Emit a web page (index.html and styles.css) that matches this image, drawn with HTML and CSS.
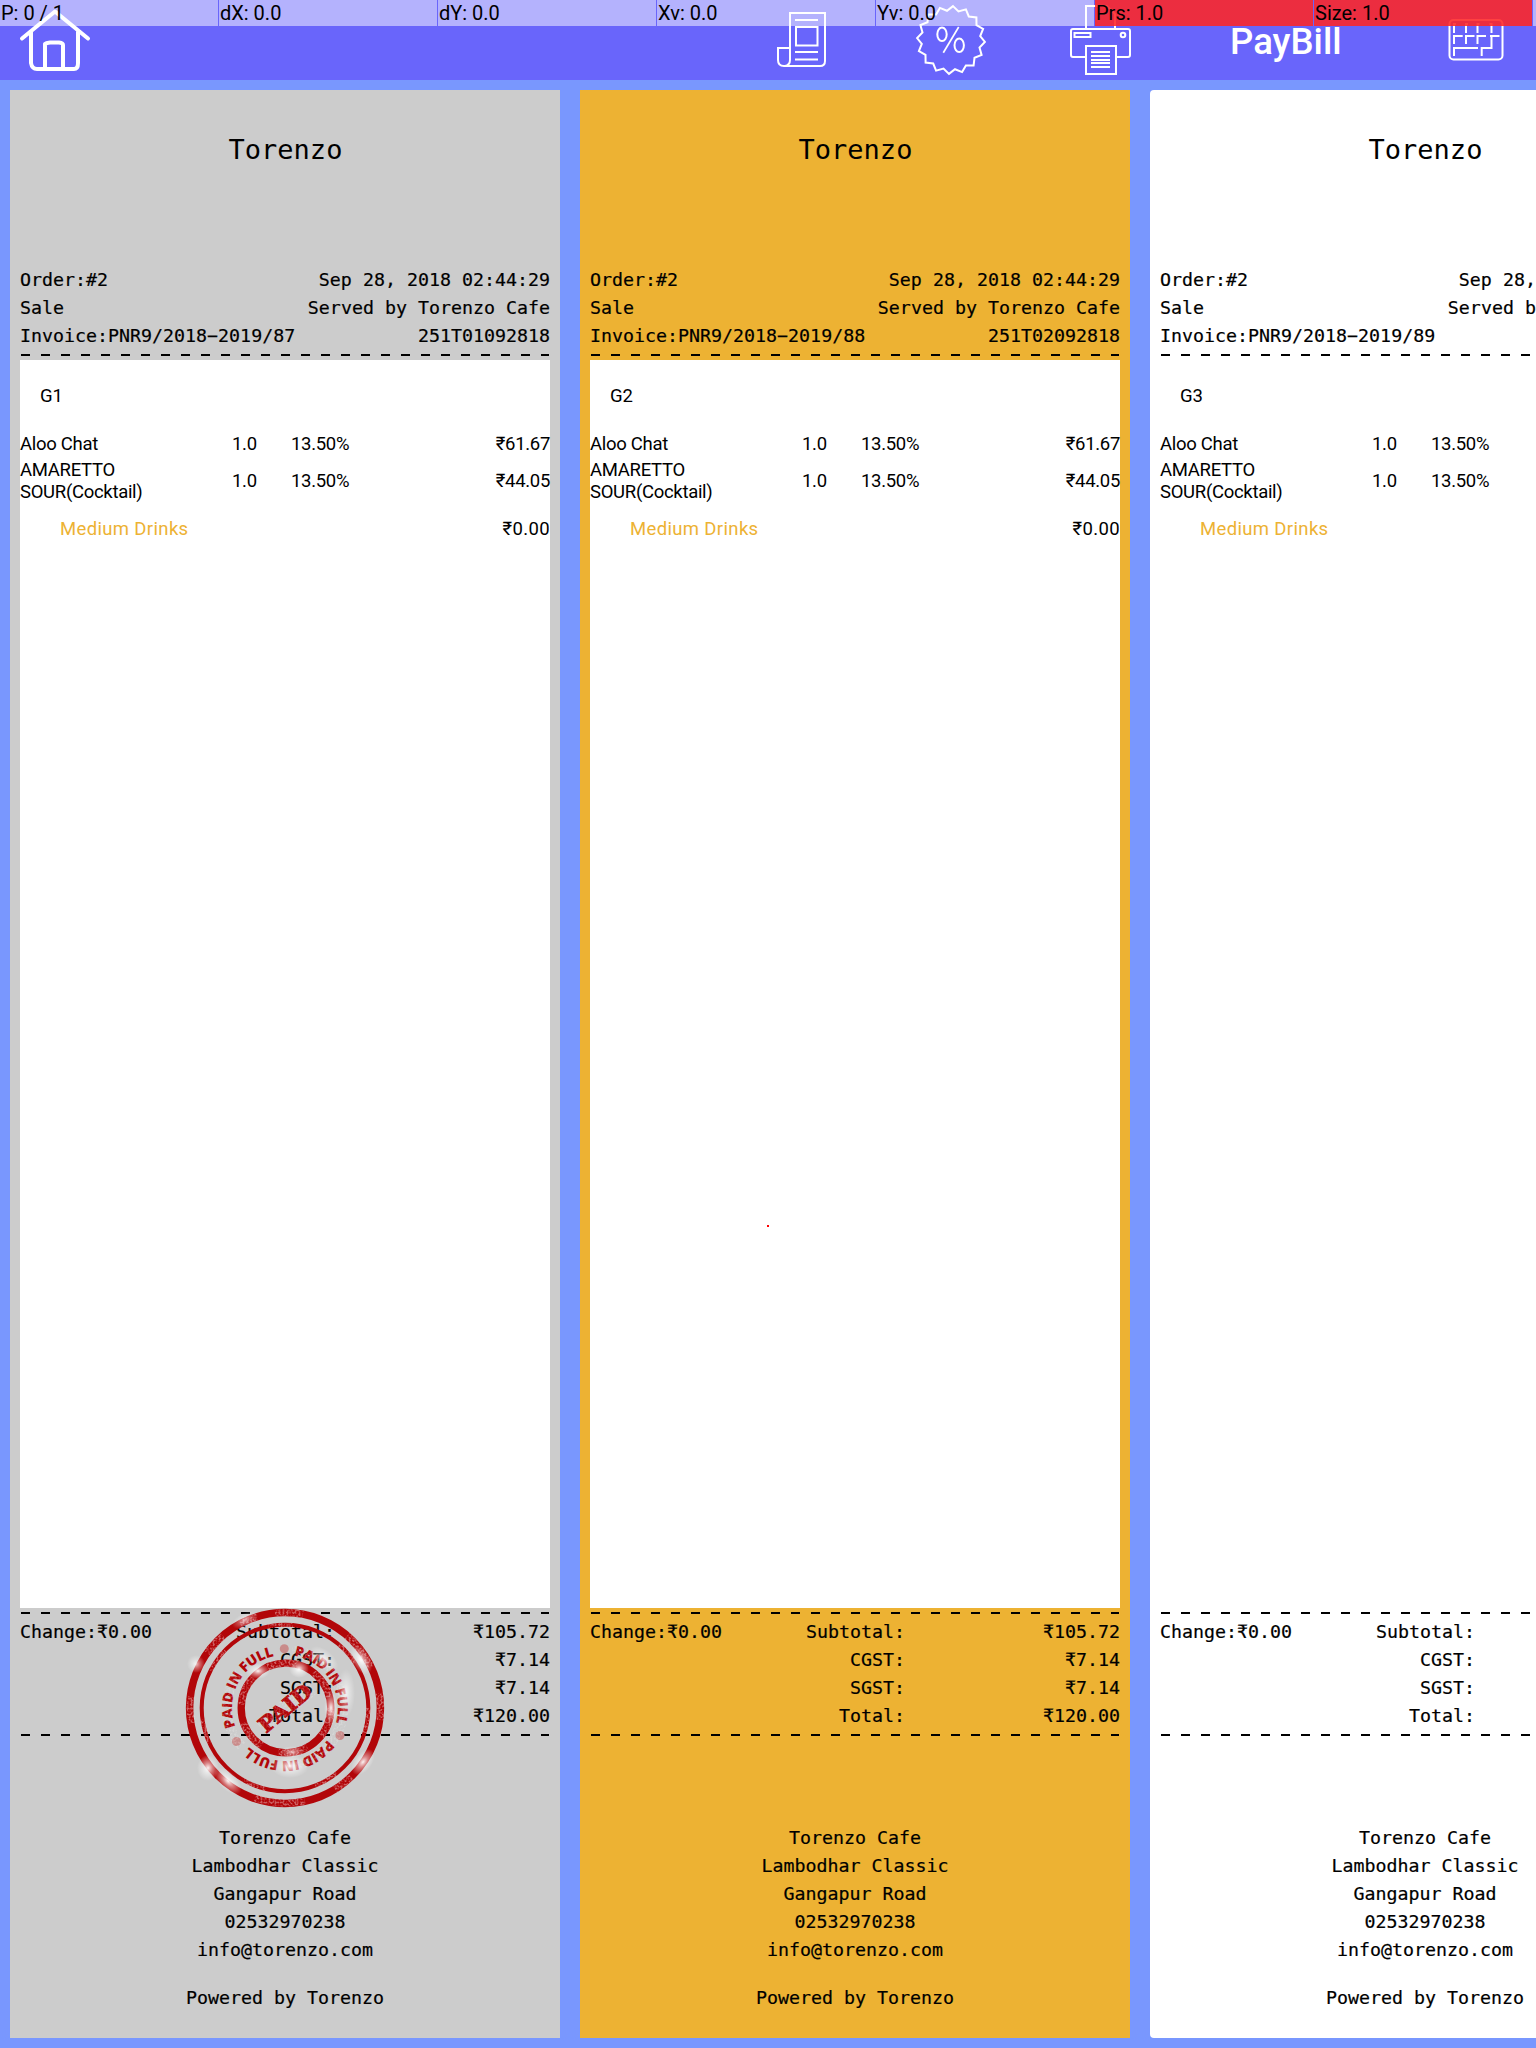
FILE: index.html
```html
<!DOCTYPE html>
<html lang="en">
<head>
<meta charset="utf-8">
<title>PayBill</title>
<link rel="stylesheet" href="styles.css">
</head>
<body>
<header class="bar">
  <svg class="ic home" width="72" height="66" viewBox="0 0 72 66" fill="none" stroke="#fff" stroke-width="4" stroke-linecap="round" stroke-linejoin="round"><path d="M3 32.500L36 5.500L69 32.500M12 26V57Q13 63 18 63H55Q59 63 59 57V26M26 62V38Q27 37 31 36.500H40Q44 37 44 39V62"/></svg>
  <svg class="ic report" width="50" height="58" viewBox="0 0 50 58" fill="none" stroke="#fff" stroke-width="2"><path d="M13 50V3H48V51Q48 56 43 56H7Q1 56 1 50V38H13V50Q13 55 8 56M18 10H41M19 17H40.500V35.500H19ZM18 42H41M18 49.500H41"/></svg>
  <svg class="ic pct" width="72" height="72" viewBox="-36 -36 72 72" fill="none" stroke="#fff" stroke-width="2"><path id="badge"/><ellipse cx="-9" cy="-5.700" rx="4.700" ry="6.800"/><ellipse cx="8.200" cy="5.300" rx="4.700" ry="6.800"/><path d="M7.700 -13L-7.700 12.700" stroke-width="1.700"/></svg>
  <svg class="ic printer" width="64" height="72" viewBox="0 0 64 72" fill="none" stroke="#fff" stroke-width="2"><path d="M17 26V3H38L46 11V26M17 54H4Q2 54 2 52V28Q2 26 4 26H59Q61 26 61 28V52Q61 54 59 54H47M5.500 30H21.500V34H5.500ZM17 43H47V71H17ZM22 49H41M22 53H41M22 57H41M22 60H41M22 64H41"/><circle cx="54" cy="32" r="2.300"/></svg>
  <span class="pay">PayBill</span>
  <svg class="ic keys" width="58" height="44" viewBox="0 0 58 44" fill="none" stroke="#fff" stroke-width="2"><rect x="2.500" y="2" width="53" height="39.500" rx="4"/><path d="M7 15V6H9M19 15V6H21M30.500 15V6H32.500M44.500 15V6H42.500M7 26V18H15.700M19 26V18H27.500M30.500 26V18H39M52.500 18H43M44.500 18V30H34.700V38M7 38V30H31"/></svg>
</header>
<div class="debug">
  <span>P: 0 / 1</span><span>dX: 0.0</span><span>dY: 0.0</span><span>Xv: 0.0</span><span>Yv: 0.0</span><span class="hot">Prs: 1.0</span><span class="hot">Size: 1.0</span>
</div>
<main class="bills" id="bills"></main>
<i class="touch"></i>
<template id="stamp">
<svg class="stamp" width="220" height="220" viewBox="-110 -110 220 220">
  <defs>
    <path id="a1" d="M-49.700 18.500A53 53 0 0 1 -8 -52.400"/>
    <path id="a2" d="M9 -52.200A53 53 0 0 1 50 17.500"/>
    <path id="a3" d="M42.500 31.700A53 53 0 0 1 -36 38.900"/>
    <radialGradient id="w"><stop offset="0" stop-color="#fff" stop-opacity=".95"/><stop offset=".4" stop-color="#fff" stop-opacity=".5"/><stop offset="1" stop-color="#fff" stop-opacity="0"/></radialGradient>
    <filter id="grain" x="-10%" y="-10%" width="120%" height="120%"><feTurbulence type="fractalNoise" baseFrequency=".5" numOctaves="2" seed="4"/><feColorMatrix values="0 0 0 0 1 0 0 0 0 1 0 0 0 0 1 0 0 0 5 -2.200"/><feComposite in2="SourceGraphic" operator="in"/></filter>
  </defs>
  <g fill="none" stroke="#b20609"><circle r="95.400" stroke-width="7.500"/><circle r="83.300" stroke-width="4"/><circle cx="1" r="44.800" stroke-width="7.300"/></g>
  <g class="arc"><text><textPath href="#a1" textLength="91" lengthAdjust="spacing">PAID IN FULL</textPath></text><text><textPath href="#a2" textLength="89" lengthAdjust="spacing">PAID IN FULL</textPath></text><text><textPath href="#a3" textLength="89" lengthAdjust="spacing">PAID IN FULL</textPath></text></g>
  <g fill="#c98b8a"><circle cx="-.7" cy="-59.300" r="4.500"/><circle cx="-48.500" cy="33.500" r="4.500"/><circle cx="55" cy="27.500" r="4.500"/></g>
  <text class="paid" transform="rotate(-40)" x="0" y="7.500" text-anchor="middle" textLength="62" lengthAdjust="spacingAndGlyphs">PAID</text>
  <g filter="url(#grain)" opacity=".35" fill="none" stroke="#fff" stroke-width="7">
    <path d="M-78 -55A95.400 95.400 0 0 1 -62 -72M-45 -84A95.400 95.400 0 0 1 -28 -91M-10 -95A95.400 95.400 0 0 1 18 -94M62 -72A95.400 95.400 0 0 1 86 -41M94 -15A95.400 95.400 0 0 1 95 12M66 69A95.400 95.400 0 0 1 50 81M20 93A95.400 95.400 0 0 1 -30 90M-93 15A95.400 95.400 0 0 1 -95 -12"/>
    <circle r="44.800" cx="1" stroke-dasharray="30 18"/><circle r="83.300" stroke-width="4" stroke-dasharray="25 50"/><circle r="58" stroke-width="10" stroke-dasharray="80 60" opacity=".5"/><path d="M-24 20L27 -21" stroke-width="17" opacity=".5"/>
  </g>
  <g fill="url(#w)"><ellipse cx="-40" cy="-88" rx="14" ry="7" transform="rotate(-25 -40 -88)" opacity=".7"/><ellipse cx="-89" cy="-44" rx="9" ry="9" opacity=".8"/><ellipse cx="-27" cy="-37" rx="12" ry="8"/><ellipse cx="14" cy="-39" rx="10" ry="9"/><ellipse cx="39" cy="-49" rx="17" ry="9" transform="rotate(40 39 -49)" opacity=".8"/><ellipse cx="76" cy="-48" rx="9" ry="16" transform="rotate(-30 76 -48)"/><ellipse cx="61" cy="-15" rx="9" ry="24" opacity=".8"/><ellipse cx="46" cy="0" rx="7" ry="17"/><ellipse cx="-77" cy="60" rx="11" ry="13"/><ellipse cx="-57" cy="73" rx="9" ry="17" transform="rotate(-45 -57 73)"/><ellipse cx="78" cy="54" rx="9" ry="15" transform="rotate(38 78 54)"/><ellipse cx="5" cy="58" rx="19" ry="12"/><ellipse cx="7" cy="44" rx="12" ry="6" opacity=".7"/></g>
</svg>
</template>
<script src="app.js"></script>
</body>
</html>
```
FILE: styles.css
```css
* { box-sizing: border-box; }
body { margin: 0; width: 1536px; height: 2048px; overflow: hidden; position: relative; background: #7997fe; color: #000; font-family: Roboto, sans-serif; }
.bar { height: 80px; background: #6965fb; display: flex; align-items: flex-start; }
.ic { display: block; flex: none; }
.home { margin: 6px 0 0 19px; }
.report { margin: 10px 0 0 686px; }
.pct { margin: 4px 0 0 88px; }
.printer { margin: 3px 0 0 82px; }
.pay { margin: 20px 0 0 97px; width: 112px; font-size: 36.600px; line-height: 44px; font-weight: 500; color: #fff; white-space: nowrap; }
.keys { margin: 18px 0 0 105px; }
.debug { position: absolute; top: 0; left: 0; width: 1536px; height: 26px; display: grid; grid-template-columns: repeat(7, 218px) 1fr; column-gap: 1px; }
.debug::after { content: ""; background: rgba(255,255,255,.5); }
.debug span { background: rgba(255,255,255,.5); padding-left: 1px; font-size: 20px; line-height: 27px; height: 26px; white-space: pre; }
.debug .hot { background: linear-gradient(rgba(255,0,0,.75), rgba(255,0,0,.75)), rgba(255,255,255,.5); }
.bills { display: flex; gap: 20px; padding: 10px; height: 1968px; overflow: hidden; }
.bill { position: relative; flex: none; width: 550px; height: 1948px; padding: 0 10px; font: 18.300px/28px "DejaVu Sans Mono", monospace; display: flex; flex-direction: column; background: #fff; white-space: pre; -webkit-text-stroke: .2px; }
.bill.grey { background: #ccc; }
.bill.amber { background: #edb233; }
.bill.plain { border-radius: 4px; }
.title { height: 176px; padding: 40px 0 0 1px; font-size: 27px; line-height: 40px; text-align: center; -webkit-text-stroke: 0; }
.row { display: flex; justify-content: space-between; height: 28px; }
.dash { flex: none; height: 2px; margin: 4px 1px; background: repeating-linear-gradient(90deg, #000 0 9px, transparent 9px 20px); }
.list { flex: none; height: 1248px; background: #fff; font: 18.500px/22px Roboto, sans-serif; -webkit-text-stroke: 0; }
.guest { padding: 25px 0 0 20px; height: 69px; }
.item { display: grid; grid-template-columns: 212px 59px 1fr auto; align-items: center; height: 30px; letter-spacing: -.3px; }
.item.two { height: 44px; }
.extra { display: flex; justify-content: space-between; padding: 15px 0 0 40px; letter-spacing: .35px; }
.extra b { font-weight: 400; color: #edb233; }
.totals { display: grid; grid-template-columns: 160px 155px 1fr; grid-auto-rows: 28px; text-align: right; }
.totals span:first-child { text-align: left; }
.foot { padding-top: 84px; text-align: center; }
.foot div { height: 28px; }
.foot .power { margin-top: 20px; }
.stamp { position: absolute; left: 165px; top: 1508px; -webkit-text-stroke: 0; }
.arc { font: 800 14px "Open Sans", sans-serif; fill: #b20609; }
.paid { font: bold 21px "DejaVu Serif", serif; fill: #b20609; stroke: #b20609; stroke-width: 1px; }
.touch { position: absolute; left: 767px; top: 1225px; width: 2px; height: 2px; background: #f00; }
```
FILE: app.js
```js
const bills = [
  { tone: 'grey', n: 1, inv: 87, code: '251T01092818', stamp: true },
  { tone: 'amber', n: 2, inv: 88, code: '251T02092818' },
  { tone: 'plain', n: 3, inv: 89, code: '251T03092818' }
];
const item = (name, price, two) => `<div class="item ${two ? 'two' : ''}"><span>${name}</span><span>1.0</span><span>13.50%</span><span>${price}</span></div>`;
document.getElementById('bills').innerHTML = bills.map(b => `<section class="bill ${b.tone}"><div class="title">Torenzo</div>
<div class="row"><span>Order:#2</span><span>Sep 28, 2018 02:44:29</span></div><div class="row"><span>Sale</span><span>Served by Torenzo Cafe</span></div><div class="row"><span>Invoice:PNR9/2018−2019/${b.inv}</span><span>${b.code}</span></div><div class="dash"></div>
<div class="list"><div class="guest">G${b.n}</div>${item('Aloo Chat', '₹61.67')}${item('AMARETTO\nSOUR(Cocktail)', '₹44.05', true)}<div class="extra"><b>Medium Drinks</b><span>₹0.00</span></div></div>
<div class="dash"></div><div class="totals"><span>Change:₹0.00</span><span>Subtotal:</span><span>₹105.72</span><span></span><span>CGST:</span><span>₹7.14</span><span></span><span>SGST:</span><span>₹7.14</span><span></span><span>Total:</span><span>₹120.00</span></div><div class="dash"></div>
<div class="foot"><div>Torenzo Cafe</div><div>Lambodhar Classic</div><div>Gangapur Road</div><div>02532970238</div><div>info@torenzo.com</div><div class="power">Powered by Torenzo</div></div></section>`).join('');
document.querySelector('.grey').append(document.getElementById('stamp').content);

// Sixteen-point outline of the discount badge
let d = '';
for (let i = 0; i < 32; i++) {
  const r = i % 2 ? 29.5 : 34, a = (i * 11.25 - 86.6) * Math.PI / 180;
  d += (i ? 'L' : 'M') + (r * Math.cos(a)).toFixed(1) + ' ' + (r * Math.sin(a)).toFixed(1);
}
document.getElementById('badge').setAttribute('d', d + 'Z');
```
